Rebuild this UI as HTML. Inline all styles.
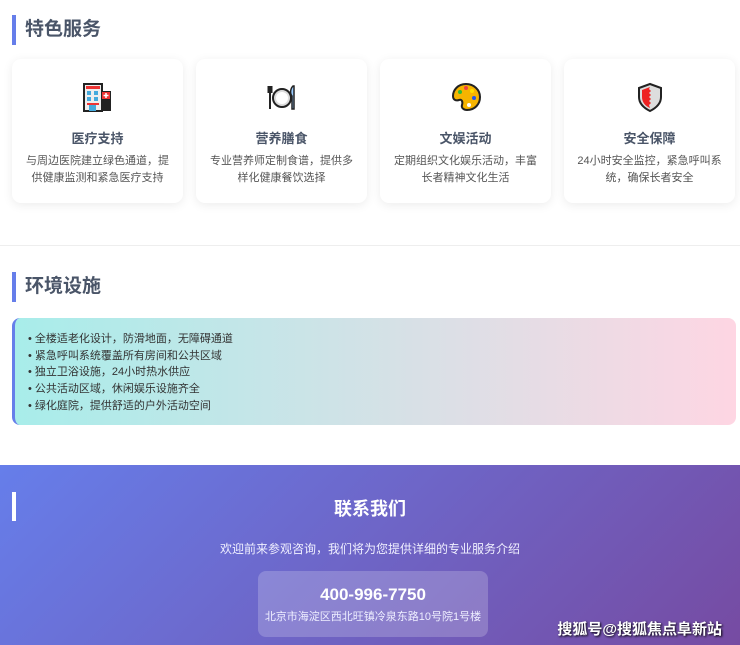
<!DOCTYPE html>
<html><head><meta charset="utf-8"><style>
*{margin:0;padding:0;box-sizing:border-box}
body{width:740px;height:645px;overflow:hidden;background:#fff;font-family:"Liberation Sans","Noto Sans CJK SC",sans-serif;position:relative}
.h{position:absolute;left:12px;border-left:4px solid #667eea;padding-left:9px;font-size:19px;font-weight:bold;color:#4a5568;height:30px;line-height:30px}
.card{position:absolute;top:59px;width:171px;height:144px;background:#fff;border-radius:9px;box-shadow:0 2px 10px rgba(0,0,0,.08);text-align:center}
.card svg{position:absolute;left:70px;top:22px}
.card .t{position:absolute;top:69px;width:100%;font-size:13px;font-weight:bold;color:#4a5568}
.card .d{position:absolute;top:94px;left:11px;right:11px;font-size:11px;line-height:17px;color:#555}
.env{position:absolute;left:12px;top:318px;width:724px;height:107px;border-radius:8px;border-left:3px solid #667eea;background:linear-gradient(90deg,#a8edea,#fed6e3);padding:13px 0 0 13px;font-size:11px;line-height:16.7px;color:#333}
.contact{position:absolute;left:0;top:465px;width:740px;height:180px;background:linear-gradient(135deg,#667eea,#764ba2)}
</style></head><body>
<div class="h" style="top:15px">特色服务</div>
<div class="card" style="left:12px"><svg width="32" height="32" viewBox="0 0 32 32"><rect x="2" y="3" width="18" height="27" fill="#eee" stroke="#222" stroke-width="2"/><rect x="19" y="10" width="10" height="20" fill="#222"/><rect x="20" y="11" width="8" height="7" fill="#e33"/><path d="M24 12v5M21.5 14.5h5" stroke="#fff" stroke-width="1.5"/><rect x="4" y="5" width="14" height="3" fill="#e33"/><rect x="5" y="10" width="4" height="4" fill="#4ad"/><rect x="12" y="10" width="4" height="4" fill="#4ad"/><rect x="5" y="16" width="4" height="4" fill="#4ad"/><rect x="12" y="16" width="4" height="4" fill="#4ad"/><rect x="5" y="22" width="12" height="2" fill="#e33"/><rect x="7" y="24" width="7" height="6" fill="#4ad"/></svg><div class="t">医疗支持</div><div class="d">与周边医院建立绿色通道，提供健康监测和紧急医疗支持</div></div>
<div class="card" style="left:196px"><svg width="32" height="32" viewBox="0 0 32 32"><circle cx="16" cy="17" r="9" fill="#ddd" stroke="#222" stroke-width="2"/><circle cx="16" cy="17" r="6" fill="#fff"/><path d="M4 5v8M2.5 5v6h3V5M4 11v17" stroke="#222" stroke-width="2" fill="none"/><path d="M27 5c-3 3-3 8-1 10v13h2V5z" fill="#9cf" stroke="#222" stroke-width="1.5"/></svg><div class="t">营养膳食</div><div class="d">专业营养师定制食谱，提供多样化健康餐饮选择</div></div>
<div class="card" style="left:380px"><svg width="32" height="32" viewBox="0 0 32 32"><path d="M16 3C8 3 3 9 3 15c0 4 3 5 6 4 3-1 4 2 3 5-1 3 2 5 5 5 8 0 13-6 13-13S24 3 16 3z" fill="#f6b400" stroke="#222" stroke-width="2"/><circle cx="10" cy="11" r="2" fill="#3b3"/><circle cx="16" cy="7" r="2" fill="#e44"/><circle cx="22" cy="10" r="2" fill="#fd0"/><circle cx="24" cy="17" r="2" fill="#25e"/><circle cx="19" cy="24" r="2" fill="#fff"/></svg><div class="t">文娱活动</div><div class="d">定期组织文化娱乐活动，丰富长者精神文化生活</div></div>
<div class="card" style="left:564px"><svg width="32" height="32" viewBox="0 0 32 32"><path d="M16 3l11 4v9c0 7-5 11-11 14C10 27 5 23 5 16V7z" fill="#ddd" stroke="#222" stroke-width="2"/><path d="M16 6l-8 3v7c0 5 3 9 8 11l-1-3 2-2-2-2 2-2-2-2 2-2-2-2 2-2-2-2z" fill="#e22"/></svg><div class="t">安全保障</div><div class="d" style="left:8px;right:8px">24小时安全监控，紧急呼叫系统，确保长者安全</div></div>
<div style="position:absolute;left:0;top:245px;width:740px;height:1px;background:#eee"></div>
<div class="h" style="top:272px">环境设施</div>
<div class="env">• 全楼适老化设计，防滑地面，无障碍通道<br>• 紧急呼叫系统覆盖所有房间和公共区域<br>• 独立卫浴设施，24小时热水供应<br>• 公共活动区域，休闲娱乐设施齐全<br>• 绿化庭院，提供舒适的户外活动空间</div>
<div class="contact">
<div style="position:absolute;left:12px;top:27px;width:4px;height:29px;background:#fff"></div>
<div style="position:absolute;left:0;width:740px;top:30px;text-align:center;color:#fff;font-size:18px;font-weight:bold">联系我们</div>
<div style="position:absolute;left:0;width:740px;top:75px;text-align:center;color:#f0f0ff;font-size:12px">欢迎前来参观咨询，我们将为您提供详细的专业服务介绍</div>
<div style="position:absolute;left:258px;top:106px;width:230px;height:66px;border-radius:8px;background:rgba(255,255,255,.2);text-align:center;color:#fff">
<div style="margin-top:14px;font-size:17px;font-weight:bold">400-996-7750</div>
<div style="margin-top:3px;font-size:11px;color:#eef">北京市海淀区西北旺镇冷泉东路10号院1号楼</div></div>
<div style="position:absolute;right:18px;top:153px;color:#fff;font-size:15px;font-weight:bold;text-shadow:1px 1px 2px #000">搜狐号@搜狐焦点阜新站</div>
</div>
</body></html>
